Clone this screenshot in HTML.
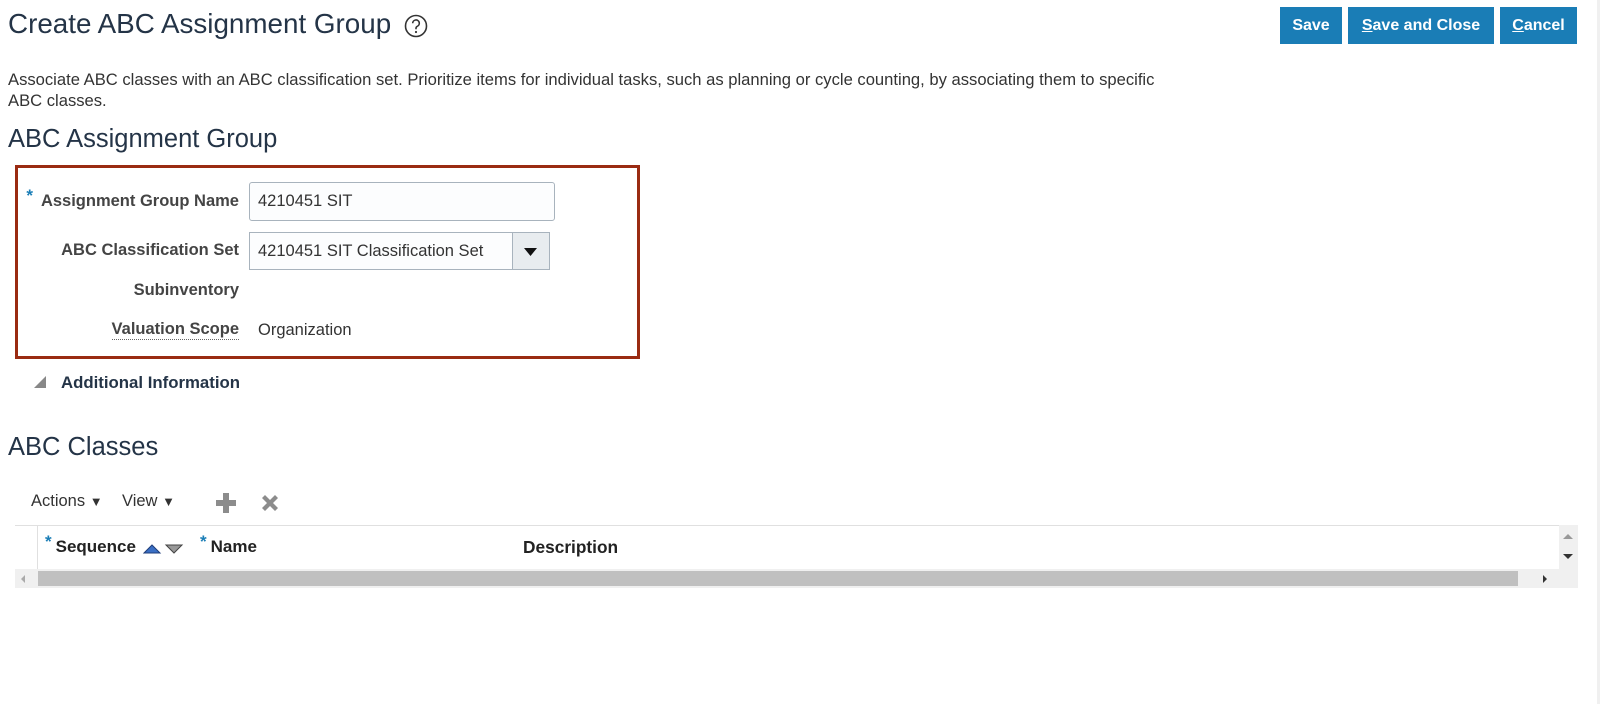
<!DOCTYPE html>
<html><head><meta charset="utf-8"><style>
*{margin:0;padding:0;box-sizing:border-box}
body{width:1600px;height:704px;background:#fff;font-family:"Liberation Sans",Arial,sans-serif;position:relative;overflow:hidden;color:#333}
.a{position:absolute;white-space:nowrap}
.btn{position:absolute;top:7px;height:37px;background:#1a7db6;color:#fff;font-weight:bold;font-size:16px;line-height:37px;text-align:center}
.lbl{position:absolute;right:1361px;font-weight:bold;font-size:16.5px;color:#444;white-space:nowrap}
.req{color:#1a7db6;font-size:17px;position:relative;top:-5px;margin-right:8px}
</style></head><body>
<div class="a" style="left:8px;top:8px;font-size:27.8px;color:#243447">Create ABC Assignment Group</div>
<svg class="a" style="left:404px;top:14px" width="24" height="24" viewBox="0 0 24 24"><circle cx="12" cy="12" r="10.5" fill="none" stroke="#333" stroke-width="1.6"/><path d="M8.7 9.3a3.3 3.3 0 1 1 4.6 3c-.9.4-1.3 1-1.3 2v.9" fill="none" stroke="#333" stroke-width="1.6"/><circle cx="12" cy="18" r="1.1" fill="#333"/></svg>
<div class="btn" style="left:1280px;width:62px">Save</div>
<div class="btn" style="left:1348px;width:146px"><u>S</u>ave and Close</div>
<div class="btn" style="left:1500px;width:77px"><u>C</u>ancel</div>
<div class="a" style="left:8px;top:69px;font-size:16.6px;line-height:21px;color:#333">Associate ABC classes with an ABC classification set. Prioritize items for individual tasks, such as planning or cycle counting, by associating them to specific<br>ABC classes.</div>
<div class="a" style="left:8px;top:125px;font-size:25.5px;color:#243447">ABC Assignment Group</div>
<div class="a" style="left:15px;top:165px;width:625px;height:194px;border:3px solid #9a2b12"></div>
<div class="lbl" style="top:191px"><span class="req">*</span>Assignment Group Name</div>
<div class="a" style="left:249px;top:182px;width:306px;height:39px;border:1px solid #a8b3bd;border-radius:3px;background:#fcfdfe;font-size:16.5px;line-height:37px;padding-left:8px;color:#333">4210451 SIT</div>
<div class="lbl" style="top:241px">ABC Classification Set</div>
<div class="a" style="left:249px;top:232px;width:301px;height:38px;border:1px solid #a8b3bd;background:#fcfdfe;font-size:16.5px;line-height:36px;padding-left:8px;color:#333">4210451 SIT Classification Set</div>
<div class="a" style="left:512px;top:232px;width:38px;height:38px;border:1px solid #a8b3bd;background:#e8ecef"><svg width="36" height="36"><path d="M11 15h13l-6.5 8z" fill="#111"/></svg></div>
<div class="lbl" style="top:281px">Subinventory</div>
<div class="lbl" style="top:320px;border-bottom:1px dotted #666">Valuation Scope</div>
<div class="a" style="left:258px;top:321px;font-size:16.5px;color:#333">Organization</div>
<svg class="a" style="left:33px;top:375px" width="14" height="14"><path d="M13 1v12H1z" fill="#888"/></svg>
<div class="a" style="left:61px;top:373px;font-size:16.8px;font-weight:bold;color:#243447">Additional Information</div>
<div class="a" style="left:8px;top:433px;font-size:25.5px;color:#243447">ABC Classes</div>
<div class="a" style="left:31px;top:492px;font-size:16.5px;color:#333">Actions <span style="font-size:13px">▼</span></div>
<div class="a" style="left:122px;top:492px;font-size:16.5px;color:#333">View <span style="font-size:13px">▼</span></div>
<svg class="a" style="left:215px;top:492px" width="22" height="22"><path d="M8 1h6v7h7v6h-7v7H8v-7H1V8h7z" fill="#8c8c8c"/></svg>
<svg class="a" style="left:259px;top:492px" width="22" height="22"><path d="M3 6l3-3 5 5 5-5 3 3-5 5 5 5-3 3-5-5-5 5-3-3 5-5z" fill="#8c8c8c"/></svg>
<div class="a" style="left:15px;top:525px;width:1563px;height:1px;background:#e0e0e0"></div>
<div class="a" style="left:37px;top:525px;width:1px;height:44px;background:#e0e0e0"></div>
<div class="a" style="left:45px;top:537px;font-size:17px;font-weight:bold;color:#222"><span class="req" style="margin-right:4px">*</span>Sequence</div>
<svg class="a" style="left:143px;top:541px" width="42" height="14"><path d="M1 12L9 4l8 8z" fill="#3a6fc4" stroke="#1f3d7a"/><path d="M23 4h16l-8 8z" fill="#999" stroke="#444"/></svg>
<div class="a" style="left:200px;top:537px;font-size:17px;font-weight:bold;color:#222"><span class="req" style="margin-right:4px">*</span>Name</div>
<div class="a" style="left:523px;top:537px;font-size:17.3px;font-weight:bold;color:#222">Description</div>
<div class="a" style="left:1559px;top:525px;width:19px;height:63px;background:#f0f0f0"></div>
<svg class="a" style="left:1561px;top:532px" width="14" height="30"><path d="M2 7l5-5 5 5z" fill="#999"/><path d="M2 22h10l-5 5z" fill="#333"/></svg>
<div class="a" style="left:15px;top:569px;width:1544px;height:19px;background:#f0f0f0"></div>
<div class="a" style="left:38px;top:571px;width:1480px;height:15px;background:#c0c0c0"></div>
<svg class="a" style="left:18px;top:572px" width="10" height="14"><path d="M7 3v8L3 7z" fill="#aaa"/></svg>
<svg class="a" style="left:1540px;top:572px" width="10" height="14"><path d="M3 3v8l4-4z" fill="#333"/></svg>
<div class="a" style="left:1597px;top:0;width:3px;height:704px;background:#f0f0f0"></div>
</body></html>
